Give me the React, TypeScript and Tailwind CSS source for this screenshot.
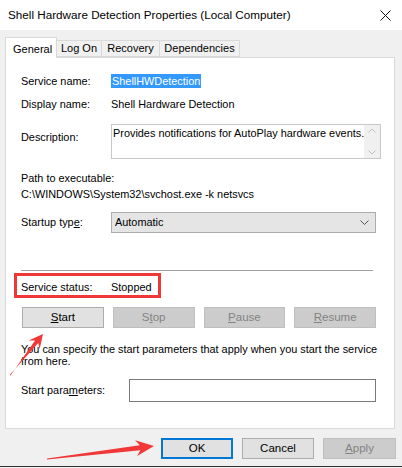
import React from 'react';

const font = "font-['Liberation_Sans',Arial,sans-serif]";

const Btn = ({ children, disabled, primary }: { children: React.ReactNode; disabled?: boolean; primary?: boolean }) => (
  <div
    className={`h-[21px] flex items-center justify-center text-[11.5px] ${
      disabled
        ? 'bg-[#cccccc] border border-[#bfbfbf] text-[#838383]'
        : primary
        ? 'bg-[#e1e1e1] border-2 border-[#0078d7] text-black'
        : 'bg-[#e1e1e1] border border-[#adadad] text-black'
    }`}
  >
    {children}
  </div>
);

const Label = ({ children }: { children: React.ReactNode }) => (
  <div className="w-[90px] shrink-0">{children}</div>
);

export default function App() {
  return (
    <div className={`relative w-[402px] h-[468px] bg-[#f0f0f0] overflow-hidden text-[10.9px] text-black ${font}`}>
      {/* title bar */}
      <div className="h-[30px] bg-white flex items-center justify-between pl-[8px] pr-[11px]">
        <span className="text-[11.7px]">Shell Hardware Detection Properties (Local Computer)</span>
        <svg width="11" height="11" viewBox="0 0 11 11">
          <path d="M0.5 0.5 L10.5 10.5 M10.5 0.5 L0.5 10.5" stroke="#111" strokeWidth="1" />
        </svg>
      </div>

      {/* tabs */}
      <div className="flex items-end pl-[5px] mt-[7px] h-[21px] relative z-10 text-[11px]">
        <div className="w-[52px] h-[21px] bg-white border border-b-0 border-[#d9d9d9] pl-[7px] pt-[3px]">
          General
        </div>
        <div className="w-[45px] h-[17px] border border-l-0 border-[#d9d9d9] flex items-center justify-center mb-[1px]">
          Log On
        </div>
        <div className="w-[58px] h-[17px] border border-l-0 border-[#d9d9d9] flex items-center justify-center mb-[1px]">
          Recovery
        </div>
        <div className="w-[80px] h-[17px] border border-l-0 border-[#d9d9d9] flex items-center justify-center mb-[1px]">
          Dependencies
        </div>
      </div>

      {/* panel */}
      <div className="ml-[5px] w-[390px] h-[372px] -mt-[1px] bg-white border border-[#d9d9d9] pl-[15px] pr-[18px] pt-[16px] flex flex-col">
        <div className="flex items-center h-[14px]">
          <Label>Service name:</Label>
          <span className="bg-[#3399ff] text-white px-[1px] leading-[14px]">ShellHWDetection</span>
        </div>
        <div className="flex items-center h-[14px] mt-[9px]">
          <Label>Display name:</Label>
          <span>Shell Hardware Detection</span>
        </div>
        <div className="flex mt-[13px]">
          <div className="w-[90px] shrink-0 pt-[5px]">Description:</div>
          <div className="flex-1 h-[35px] border border-[#c8c8c8] flex">
            <div className="flex-1 pl-[1px] pt-[1px] leading-[14px] whitespace-nowrap overflow-hidden">
              Provides notifications for AutoPlay hardware events.
            </div>
            <div className="w-[16px] bg-[#f0f0f0] flex flex-col items-center justify-between py-[3px]">
              <svg width="8" height="5" viewBox="0 0 8 5">
                <path d="M0.5 4.5 L4 1 L7.5 4.5" stroke="#c2c2c2" fill="none" />
              </svg>
              <svg width="8" height="5" viewBox="0 0 8 5">
                <path d="M0.5 0.5 L4 4 L7.5 0.5" stroke="#c2c2c2" fill="none" />
              </svg>
            </div>
          </div>
        </div>
        <div className="h-[14px] leading-[14px] mt-[12px]">Path to executable:</div>
        <div className="h-[14px] leading-[14px] mt-[2px]">C:\WINDOWS\System32\svchost.exe -k netsvcs</div>
        <div className="flex items-center mt-[11px]">
          <Label>
            Startup typ<u>e</u>:
          </Label>
          <div className="flex-1 h-[21px] bg-[#e5e5e5] border border-[#adadad] flex items-center justify-between pl-[3px] pr-[6px]">
            <span>Automatic</span>
            <svg width="9" height="5" viewBox="0 0 9 5">
              <path d="M0.5 0.5 L4.5 4.5 L8.5 0.5" stroke="#555" fill="none" />
            </svg>
          </div>
        </div>
        <div className="h-[1px] bg-[#a0a0a0] mt-[37px] mr-[3px]" />
        <div className="ml-[-7px] w-[147px] h-[25px] mt-[2px] border-[3px] border-[#f03838] flex items-start pt-[3px] pl-[4px]">
          <Label>Service status:</Label>
          <span>Stopped</span>
        </div>
        <div className="grid grid-cols-4 gap-[9px] mt-[9px] ml-[1px]">
          <Btn>
            <u>S</u>tart
          </Btn>
          <Btn disabled>
            S<u>t</u>op
          </Btn>
          <Btn disabled>
            <u>P</u>ause
          </Btn>
          <Btn disabled>
            <u>R</u>esume
          </Btn>
        </div>
        <div className="leading-[12px] mt-[15px] mr-[-14px]">
          You can specify the start parameters that apply when you start the service from here.
        </div>
        <div className="flex items-center mt-[12px]">
          <div className="w-[108px] shrink-0">
            Start para<u>m</u>eters:
          </div>
          <div className="flex-1 h-[23px] border border-[#7a7a7a]" />
        </div>
      </div>

      {/* bottom buttons */}
      <div className="flex justify-end gap-[9px] pr-[6px] mt-[9px]">
        <div className="w-[72px]">
          <Btn primary>OK</Btn>
        </div>
        <div className="w-[72px]">
          <Btn>Cancel</Btn>
        </div>
        <div className="w-[73px]">
          <Btn disabled>
            <u>A</u>pply
          </Btn>
        </div>
      </div>
      <div className="absolute left-0 right-0 bottom-[1px] h-[1px] bg-[#333]" />

      {/* annotation arrows */}
      <svg className="absolute left-0 top-0 pointer-events-none" width="402" height="468" viewBox="0 0 402 468">
        <polygon
          points="9.6,375 38.3,343 39.6,349.3 43,334 28.7,340.5 35.1,340.5 10.4,375.4"
          fill="#f03838"
        />
        <polygon
          points="47,459.6 140.4,450.2 137.1,456.1 154,446 135.1,440.3 139.8,445.2 47,458.6"
          fill="#f03838"
        />
      </svg>
    </div>
  );
}
